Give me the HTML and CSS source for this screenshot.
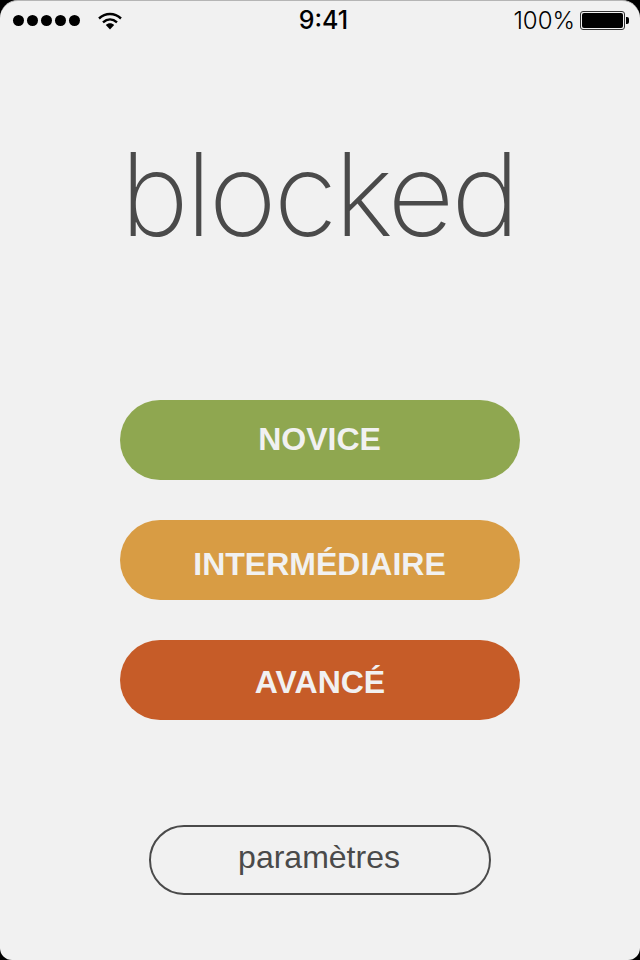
FILE: index.html
```html
<!DOCTYPE html>
<html lang="fr">
<head>
<meta charset="utf-8">
<title>blocked</title>
<link rel="stylesheet" href="styles.css">
</head>
<body>
<div class="screen">
  <header class="status">
    <div class="status-left">
      <div class="dots"><i></i><i></i><i></i><i></i><i></i></div>
      <svg class="wifi" viewBox="0 0 24 18" width="24" height="18">
        <path d="M1 6.5C7.5 .5 16.5 .5 23 6.5" fill="none" stroke="#000" stroke-width="2.4"/>
        <path d="M5 10.3C9.3 6.5 14.7 6.5 19 10.3" fill="none" stroke="#000" stroke-width="2.4"/>
        <path d="M12 17.5L7.8 13C10.2 10.8 13.8 10.8 16.2 13Z" fill="#000"/>
      </svg>
    </div>
    <div class="clock">9:41</div>
    <div class="status-right">
      <span class="pct">100%</span>
      <div class="battery"><div class="level"></div></div>
      <div class="nub"></div>
    </div>
  </header>
  <h1 class="logo">blocked</h1>
  <nav class="levels">
    <a class="level-btn novice">NOVICE</a>
    <a class="level-btn inter">INTERMÉDIAIRE</a>
    <a class="level-btn avance">AVANCÉ</a>
  </nav>
  <a class="settings">paramètres</a>
</div>
</body>
</html>
```
FILE: styles.css
```css
* { box-sizing: border-box; }
html, body { margin: 0; padding: 0; background: #000; }
body { width: 640px; height: 960px; overflow: hidden; }
.screen {
  width: 640px; height: 960px;
  background: #f1f1f1;
  border-top: 1px solid #b5b5b5;
  border-radius: 18px 18px 12px 12px;
  display: flex; flex-direction: column; align-items: center;
  font-family: "Liberation Sans", Arial, sans-serif;
  overflow: hidden;
}
.status {
  width: 100%; height: 39px;
  display: grid; grid-template-columns: 1fr auto 1fr; align-items: center;
  padding: 0 11px 0 13px;
  color: #000;
}
.status-left { display: flex; align-items: center; gap: 18px; }
.dots { display: flex; gap: 3px; }
.dots i { display: block; width: 11px; height: 11px; border-radius: 50%; background: #000; }
.clock { font: 500 25px/1 Inter, sans-serif; padding-left: 5px; }
.status-right { display: flex; align-items: center; justify-content: flex-end; }
.pct { font: 300 24px/1 Inter, sans-serif; margin-right: 5px; }
.battery { width: 45px; height: 19px; border: 1px solid #333; border-radius: 3px; padding: 1px; }
.level { width: 100%; height: 100%; background: #000; border-radius: 2px; }
.nub { width: 3px; height: 7px; background: #000; border-radius: 0 2px 2px 0; margin-left: 1px; }
.logo {
  margin: 94px 0 0; height: 120px; padding-right: 3px;
  font: 200 116px/120px Inter, sans-serif;
  color: #4a4a4a; letter-spacing: -3px;
}
.levels { margin-top: 146px; display: flex; flex-direction: column; gap: 40px; }
.level-btn {
  width: 400px; height: 80px; border-radius: 40px;
  display: flex; align-items: center; justify-content: center;
  font-size: 32px; font-weight: 700; color: #f1f1f1;
}
.novice { background: #8fa750; padding: 0 1px 2px 0; }
.inter { background: #d89c44; padding: 9px 1px 0 0; }
.avance { background: #c65c28; padding-top: 5px; }
.settings {
  margin-top: 105px;
  width: 342px; height: 70px; border-radius: 35px;
  border: 2px solid #4a4a4a; color: #4a4a4a;
  display: flex; align-items: center; justify-content: center;
  font-size: 32px; padding: 0 2px 6px 0;
}
```
